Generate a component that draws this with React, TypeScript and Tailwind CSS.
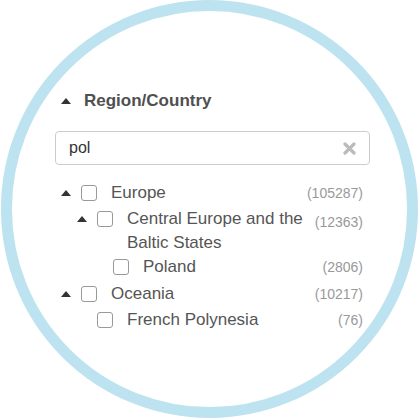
import React from "react";

type Row = {
  level: number;
  label: string;
  count: string;
  expandable: boolean;
  mt: string;
  countMt: string;
};

const rows: Row[] = [
  { level: 0, label: "Europe", count: "(105287)", expandable: true, mt: "mt-0", countMt: "mt-[1px]" },
  { level: 1, label: "Central Europe and the Baltic States", count: "(12363)", expandable: true, mt: "mt-[2px]", countMt: "mt-[4px]" },
  { level: 2, label: "Poland", count: "(2806)", expandable: false, mt: "mt-0", countMt: "mt-[1px]" },
  { level: 0, label: "Oceania", count: "(10217)", expandable: true, mt: "mt-[3px]", countMt: "mt-[1px]" },
  { level: 1, label: "French Polynesia", count: "(76)", expandable: false, mt: "mt-[2px]", countMt: "mt-[1px]" },
];

const indent = ["pl-0", "pl-4", "pl-8"];

function Caret() {
  return (
    <svg width="10" height="6" viewBox="0 0 10 6" className="block">
      <polygon points="0,6 10,6 5,0" fill="#333" />
    </svg>
  );
}

export default function App() {
  return (
    <div
      className="w-[420px] h-[420px] bg-white"
      style={{ fontFamily: '"Liberation Sans", Arial, sans-serif' }}
    >
      <div className="ml-[1px] w-[417px] h-[418px] rounded-full border-[11px] border-[#bde3f0] pt-[79px] pl-[43px] pr-[37px]">
        <div className="flex items-center h-[22px]">
          <div className="ml-[6px] w-[10px] mr-[13px]">
            <Caret />
          </div>
          <span className="text-[17px] font-bold text-[#505050]">Region/Country</span>
        </div>

        <div className="mt-[19px] h-[34px] border border-[#ccc] rounded-[4px] flex items-center pl-[13px] pr-[13px]">
          <span className="flex-1 text-[16px] text-[#333]">pol</span>
          <svg width="13" height="13" viewBox="0 0 13 13">
            <path d="M2 2 L11 11 M11 2 L2 11" stroke="#bbb" strokeWidth="3.2" strokeLinecap="round" />
          </svg>
        </div>

        <div className="mt-[16px] pr-[7px]">
          {rows.map((r, i) => (
            <div key={i} className={`flex items-start ${indent[r.level]} ${r.mt}`}>
              <div className="w-[26px] h-[24px] flex items-center shrink-0">
                {r.expandable ? (
                  <div className="ml-[6px]">
                    <Caret />
                  </div>
                ) : null}
              </div>
              <div className="h-[24px] flex items-center shrink-0">
                <div className="w-[16px] h-[16px] border border-[#999] rounded-[3px] bg-white" />
              </div>
              <div className="ml-[14px] flex-1 text-[17px] leading-[24px] text-[#555]">{r.label}</div>
              <div className={`ml-2 shrink-0 text-[14px] leading-[22px] text-[#999] ${r.countMt}`}>{r.count}</div>
            </div>
          ))}
        </div>
      </div>
    </div>
  );
}
